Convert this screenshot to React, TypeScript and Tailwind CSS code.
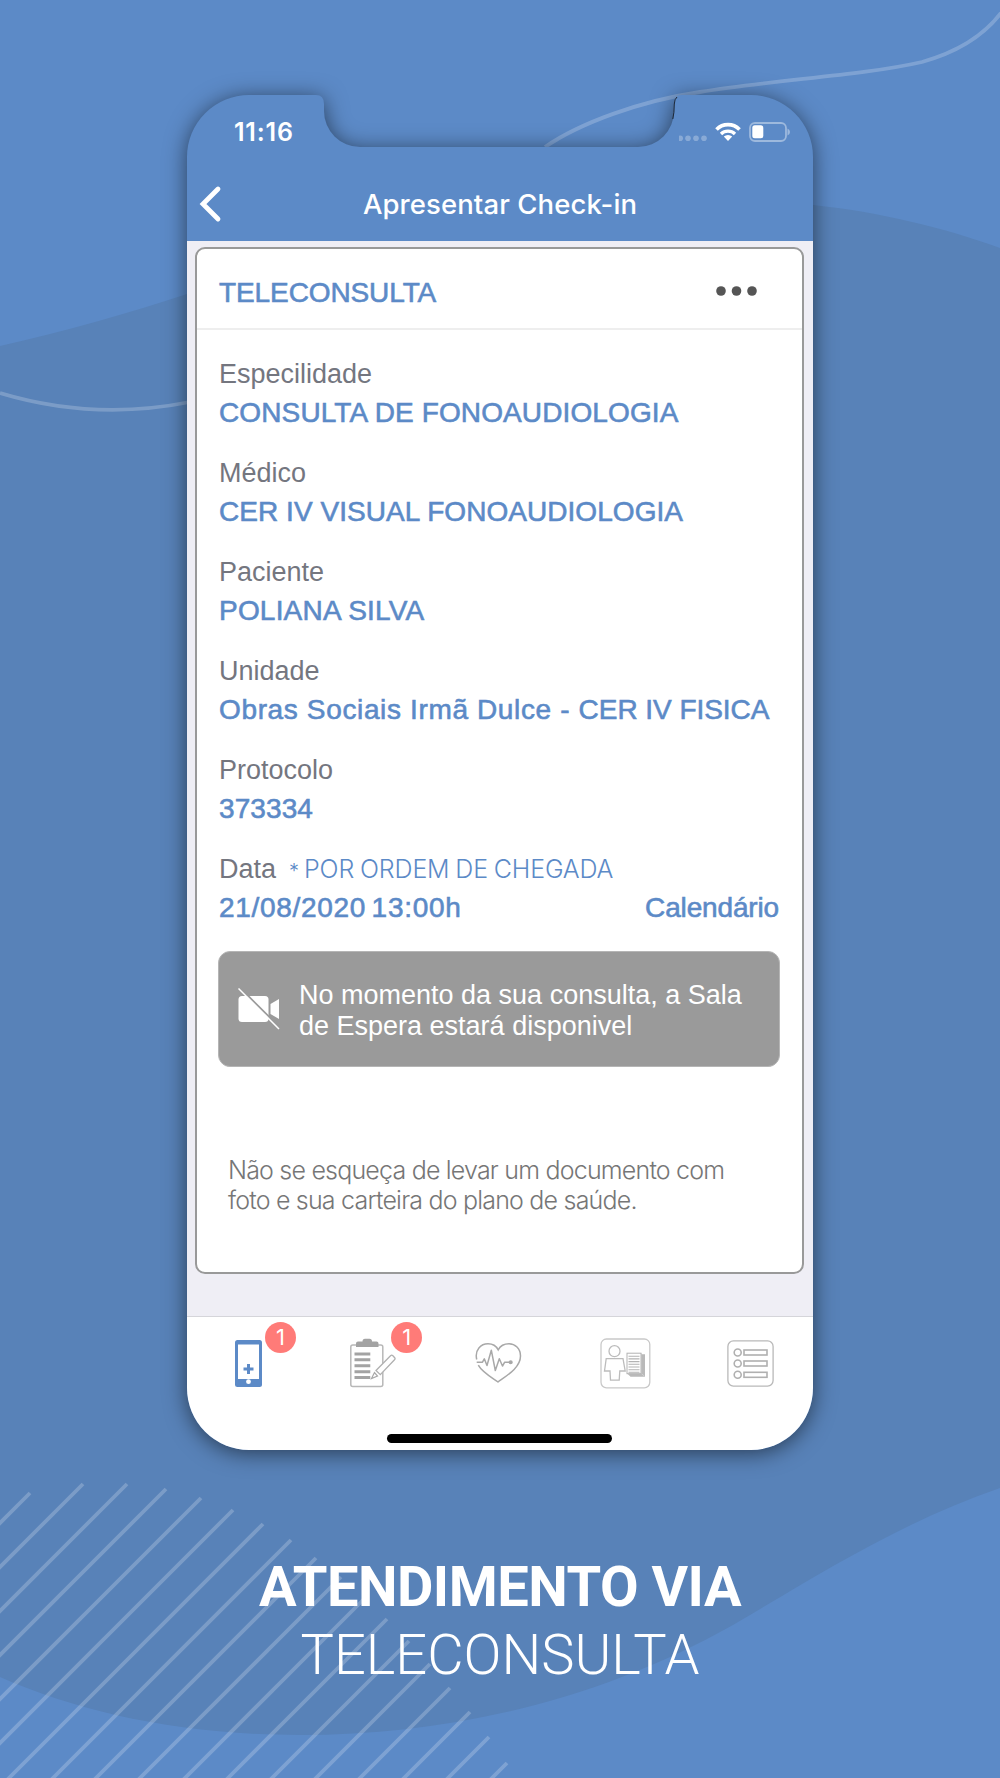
import type { ReactNode } from 'react'
import { clsx } from 'clsx'

interface Field {
  label: string
  value: ReactNode
  tracking: string
}

const FIELDS: Field[] = [
  { label: 'Especilidade', value: 'CONSULTA DE FONOAUDIOLOGIA', tracking: 'tracking-[0.12px]' },
  { label: 'Médico', value: 'CER IV VISUAL FONOAUDIOLOGIA', tracking: 'tracking-[0.05px]' },
  { label: 'Paciente', value: 'POLIANA SILVA', tracking: 'tracking-[0.2px]' },
  {
    label: 'Unidade',
    value: (
      <>
        Obras Sociais Irmã Dulce - <span className="tracking-[-0.05px]">CER IV FISICA</span>
      </>
    ),
    tracking: 'tracking-[0.64px]',
  },
  { label: 'Protocolo', value: '373334', tracking: 'tracking-[0.1px]' },
]

// upper right end of each diagonal stripe
const STRIPES = [
  [30, 1493], [83, 1484], [127, 1484], [166, 1489], [201, 1498], [233, 1510],
  [263, 1524], [291, 1540], [316, 1558], [341, 1577], [365, 1598], [387, 1619],
  [409, 1641], [430, 1664], [450, 1688], [470, 1712], [489, 1737], [507, 1763],
]

const valueClass = 'text-[28px] leading-[38px] text-[#5c8ac7] [-webkit-text-stroke:0.6px_#5c8ac7]'
const labelClass = 'text-[27px] leading-10 text-[#74767f]'

const Backdrop = () => (
  <svg className="absolute inset-0" width="1000" height="1778" viewBox="0 0 1000 1778" fill="none">
    <rect width="1000" height="1778" fill="#5c8ac7" />
    <path
      d="M0 346C66 331 130 313 187 294L813 205C880 212 945 228 1000 248V1488C900 1522 810 1580 733 1625C600 1700 450 1735 300 1735C180 1735 80 1712 0 1677Z"
      fill="#5882b8"
    />
    <g stroke="#fff" strokeOpacity="0.21" strokeWidth="3.8">
      <path d="M545 147C580 123 640 101 700 92C780 79 860 76 922 62C958 52 985 34 1001 13" />
      <path d="M0 393C60 411 125 415 190 402" />
      {STRIPES.map(([x, y]) => (
        <path key={x} d={`M${x} ${y}l-500 500`} />
      ))}
    </g>
    <path
      className="[filter:drop-shadow(0_3px_11px_rgba(0,0,0,0.55))]"
      d="M249 95H316Q324 95 324 104V111A36 36 0 0 0 360 147H638A36 36 0 0 0 674 111V104Q674 95 682 95H751A62 62 0 0 1 813 157V1388A62 62 0 0 1 751 1450H249A62 62 0 0 1 187 1388V157A62 62 0 0 1 249 95Z"
      fill="#5c8ac7"
    />
    <path d="M672.800 119Q674.300 113 674.300 104Q674.500 99 677 97" stroke="#1d2735" strokeWidth="1" />
  </svg>
)

const StatusIcons = () => (
  <svg className="mt-[-3px]" width="112" height="22" viewBox="679 120 112 22" fill="none">
    <g fill="#fff" fillOpacity="0.28">
      <circle cx="680.200" cy="138.300" r="2.800" />
      <circle cx="688" cy="138.300" r="2.800" />
      <circle cx="696" cy="138.300" r="2.800" />
      <circle cx="704" cy="138.300" r="2.800" />
    </g>
    <path d="M716.500 129.500A16 16 0 0 1 739.500 129.500" stroke="#fff" strokeWidth="3.600" />
    <path d="M721 134A10 10 0 0 1 735 134" stroke="#fff" strokeWidth="3.300" />
    <path d="M723.800 136.600A6 6 0 0 1 732.200 136.600L728 141Z" fill="#fff" />
    <rect x="750" y="123" width="36" height="18" rx="5" stroke="#fff" strokeOpacity="0.4" strokeWidth="1.800" />
    <rect x="752.300" y="125.300" width="11" height="13" rx="2.500" fill="#fff" />
    <path d="M787.500 128.500Q790 129.500 790 132T787.500 135.500Z" fill="#fff" fillOpacity="0.4" />
  </svg>
)

const VideoOffIcon = () => (
  <svg className="shrink-0" width="42" height="42" viewBox="0 0 42 42" fill="none">
    <rect x="0.500" y="8" width="30" height="26" rx="3.500" fill="#fff" />
    <path d="M32.500 16L41 11V31L32.500 26Z" fill="#fff" />
    <path d="M1.700 -0.500L42.200 40" stroke="#9a9a9a" strokeWidth="2" />
    <path d="M0.500 0.500L41 41" stroke="#fff" strokeWidth="1.500" />
  </svg>
)

const PhoneIcon = () => (
  <svg width="27" height="47" viewBox="0 0 27 47">
    <rect width="27" height="47" rx="2.500" fill="#5c8ac7" />
    <rect x="3" y="4.500" width="21" height="34.500" fill="#fff" />
    <path d="M13.500 24V34M8.500 29H18.500" stroke="#5c8ac7" strokeWidth="3" />
    <circle cx="13.500" cy="41.700" r="2.400" fill="#fff" />
  </svg>
)

const ClipboardIcon = () => (
  <svg width="46" height="50" viewBox="351 1338.500 46 50" fill="none">
    <rect x="351.800" y="1345.500" width="32" height="41.500" rx="2" stroke="#b8b8b8" strokeWidth="1.500" />
    <path
      d="M357 1347.500V1344Q357 1342 359 1342H363.500Q363.500 1339.200 366 1339.200H370.500Q373 1339.200 373 1342H377.500Q379.500 1342 379.500 1344V1347.500Z"
      fill="#a3a3a3"
    />
    <path
      d="M355.500 1354.500H371.300M355.500 1360.300H371.300M355.500 1366.300H371.300M355.500 1372.300H371.300M355.500 1378H371.300"
      stroke="#a3a3a3"
      strokeWidth="3"
    />
    <path
      d="M377 1371L391.500 1356.200Q392.700 1355.200 393.900 1356.200L395.700 1358.200Q396.500 1359.300 395.500 1360.300L381.300 1375.200Z"
      fill="#fff"
      stroke="#b0b0b0"
      strokeWidth="1.300"
    />
    <path d="M375.500 1373L372.500 1379L378.500 1376.500Z" fill="#fff" stroke="#a8a8a8" strokeWidth="1.200" />
  </svg>
)

const HeartIcon = () => (
  <svg width="47" height="42" viewBox="476 1342.500 47 42" fill="none" stroke="#a8a8a8" strokeWidth="1.500">
    <path d="M477.700 1360C475.500 1350 482 1344.300 489 1344.300C494 1344.300 497.500 1347 499.200 1350.300C501 1347 505 1344.300 510 1344.300C516 1344.300 521.500 1349 521.500 1356.500C521.500 1368 508 1376 499 1382.500C491 1377 483 1372.500 479.300 1365.700" />
    <path d="M477.700 1362.700H483.500L485.300 1359.300L488 1366L492.300 1350.700L496.300 1371L500.300 1359.300L503.500 1366.500L505.700 1362.700H511" strokeLinejoin="round" />
    <circle cx="511.700" cy="1362.700" r="1.300" fill="#a8a8a8" />
  </svg>
)

const PatientIcon = () => (
  <svg width="51" height="51" viewBox="600.500 1338.300 51 51" fill="none">
    <rect x="601.500" y="1339.300" width="48.800" height="48.800" rx="5.500" stroke="#c9c9c9" strokeWidth="1.300" />
    <g stroke="#bcbcbc" strokeWidth="1.300">
      <circle cx="615" cy="1351.500" r="5.500" />
      <path d="M606.700 1359H623.500L625.700 1371.300H620.300L619.700 1380.500H611L610.500 1371.300H605Z" />
    </g>
    <path d="M631 1354.500H645.500V1377H631L628 1374Z" fill="#b9b9b9" />
    <path d="M641.800 1353.500V1373.800L645 1376.500" stroke="#d8d8d8" strokeWidth="0.700" />
    <rect x="627.500" y="1353.500" width="14" height="20.500" fill="#fff" stroke="#b3b3b3" />
    <path
      d="M629 1356.500H640M629 1359.200H640M629 1361.900H640M629 1364.600H640M629 1367.300H640M629 1370H640M629 1372.500H640"
      stroke="#b3b3b3"
      strokeWidth="1.100"
    />
  </svg>
)

const ListIcon = () => (
  <svg width="47" height="47" viewBox="727.500 1339.500 47 47" fill="none">
    <rect x="728.400" y="1340.400" width="45.200" height="45.200" rx="5.500" stroke="#b9b9b9" strokeWidth="1.300" />
    <g stroke="#b0b0b0" strokeWidth="1.600">
      {[1352, 1363, 1374.3].map(y => (
        <g key={y}>
          <circle cx="738.200" cy={y} r="3.500" />
          <rect x="744.500" y={y - 2.5} width="23" height="5" />
        </g>
      ))}
    </g>
  </svg>
)

const TABS = [
  { id: 'phone', icon: <PhoneIcon />, offset: 'pr-[3px]', badge: 'left-[78px]' },
  { id: 'forms', icon: <ClipboardIcon />, offset: 'pr-[3px]', badge: 'left-[79px]' },
  { id: 'health', icon: <HeartIcon />, offset: 'pr-[2px]' },
  { id: 'patient', icon: <PatientIcon />, offset: 'pl-[1px]' },
  { id: 'menu', icon: <ListIcon />, offset: 'pl-[1px]' },
]

const App: React.FC = () => {
  return (
    <div className="relative h-[1778px] w-[1000px] overflow-hidden font-['Liberation_Sans',sans-serif] whitespace-nowrap">
      <Backdrop />

      <div className="relative mx-auto mt-[95px] flex h-[1355px] w-[626px] flex-col overflow-hidden rounded-[62px]">
        <header className="h-[146px] font-['Inter',sans-serif] text-white">
          <div className="flex h-[74px] items-center justify-between pr-[22px] pl-[47px]">
            <span className="pt-0.5 text-[25px] font-semibold tracking-[0.8px]">11:16</span>
            <StatusIcons />
          </div>
          <div className="flex h-[70px] items-center pl-3">
            <svg width="24" height="38" viewBox="0 0 24 38" fill="none">
              <path d="M19 4L4 19L19 34" stroke="#fff" strokeWidth="4.800" strokeLinecap="round" />
            </svg>
            <h1 className="mr-9 flex-1 pt-0.5 text-center text-[27.5px] font-[550] tracking-[0.1px]">
              Apresentar Check-in
            </h1>
          </div>
        </header>

        <main className="h-[1075px] bg-[#efeef5] px-2 pt-1.5">
          <section className="h-[1027px] w-[609px] rounded-[10px] border-2 border-[#999] bg-white">
            <div className="flex h-[81px] items-center justify-between border-b-2 border-[#eeeeee] pt-2 pr-[44px] pl-[22px]">
              <h2 className={clsx(valueClass, 'tracking-[-0.1px]')}>TELECONSULTA</h2>
              <svg className="mb-1" width="42" height="10" fill="#555">
                <circle cx="5" cy="5" r="4.800" />
                <circle cx="20.500" cy="5" r="4.800" />
                <circle cx="36" cy="5" r="4.800" />
              </svg>
            </div>

            <div className="flex flex-col gap-[21px] px-[22px] pt-6">
              {FIELDS.map(field => (
                <div key={field.label}>
                  <div className={labelClass}>{field.label}</div>
                  <div className={clsx(valueClass, field.tracking)}>{field.value}</div>
                </div>
              ))}
              <div>
                <div className="flex h-10 items-baseline">
                  <span className={labelClass}>Data</span>
                  <span className="ml-[13px] font-['Inter',sans-serif] text-[20px] leading-10 font-light text-[#5c8ac7]">
                    *
                  </span>
                  <span className="ml-[5px] font-['Inter',sans-serif] text-[25px] leading-10 font-light tracking-[-0.15px] [word-spacing:-1px] text-[#5c8ac7]">
                    POR ORDEM DE CHEGADA
                  </span>
                </div>
                <div className={clsx(valueClass, 'flex justify-between pr-px')}>
                  <span className="tracking-[0.7px] [word-spacing:-3px]">21/08/2020 13:00h</span>
                  <span className="tracking-[-0.15px]">Calendário</span>
                </div>
              </div>
            </div>

            <div className="mt-6 ml-[21px] flex h-[116px] w-[562px] items-center gap-[19px] rounded-xl border border-[#b5b5b5] bg-[#9a9a9a] pl-[19px] text-[27px] leading-[31px] text-white">
              <VideoOffIcon />
              <p className="pt-1">
                No momento da sua consulta, a Sala
                <br />
                de Espera estará disponivel
              </p>
            </div>

            <p className="mt-[88px] ml-[31px] font-['Inter',sans-serif] text-[25px] leading-[30px] font-light tracking-[-0.8px] text-[#767676]">
              Não se esqueça de levar um documento com
              <br />
              foto e sua carteira do plano de saúde.
            </p>
          </section>
        </main>

        <nav className="flex flex-1 flex-col items-center border-t border-[#d5d5da] bg-white">
          <div className="flex h-[92px] w-full">
            {TABS.map(tab => (
              <div key={tab.id} className={clsx('relative flex w-1/5 items-center justify-center', tab.offset)}>
                {tab.icon}
                {tab.badge && (
                  <span
                    className={clsx(
                      "absolute top-[5px] flex size-[31px] items-center justify-center rounded-full bg-[#ff7b78] font-['Inter',sans-serif] text-[22px] text-white",
                      tab.badge
                    )}
                  >
                    1
                  </span>
                )}
              </div>
            ))}
          </div>
          <div className="mt-[25px] mr-px h-[9px] w-[225px] rounded-full bg-black" />
        </nav>
      </div>

      <footer className="relative mt-[103px] text-center font-['Roboto',sans-serif] text-[56px] leading-[68px] text-white">
        <div className="font-bold tracking-[-0.5px]">ATENDIMENTO VIA</div>
        <div className="font-light">TELECONSULTA</div>
      </footer>
    </div>
  )
}

export default App
